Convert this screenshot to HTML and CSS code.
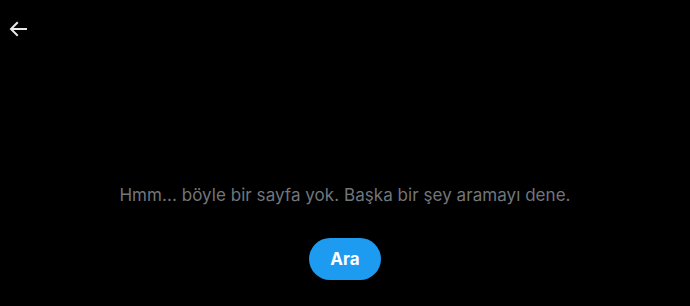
FILE: index.html
```html
<!DOCTYPE html>
<html lang="tr">

<head>
  <meta charset="UTF-8">
  <title>Sayfa bulunamadı</title>
  <meta name="viewport" content="width=device-width, initial-scale=1">
  <link rel="stylesheet" href="styles.css">
</head>

<body>
  <header class="topbar">
    <button class="back-btn" aria-label="Geri">
      <svg viewBox="0 0 24 24" class="back-icon">
        <path d="M7.414 13l5.043 5.04-1.414 1.42L3.586 12l7.457-7.46 1.414 1.42L7.414 11H21v2H7.414z"></path>
      </svg>
    </button>
  </header>
  <main class="empty">
    <p class="empty-text">Hmm... böyle bir sayfa yok. Başka bir şey aramayı dene.</p>
    <button class="search-btn">Ara</button>
  </main>
</body>

</html>
```

FILE: styles.css
```css
body {
  font-family: Inter, "Noto Sans", Arial, sans-serif;
  background: #000;
  color: #e7e9ea;
  margin: 0;
}

.topbar {
  height: 53px;
  display: flex;
  align-items: center;
  padding-left: 2px;
}

.back-btn {
  width: 32px;
  height: 32px;
  padding: 4px;
  border: none;
  background: transparent;
  cursor: pointer;
  margin-top: 4px;
}

.back-icon {
  width: 24px;
  height: 24px;
  fill: #e7e9ea;
  display: block;
}

.empty {
  display: flex;
  flex-direction: column;
  align-items: center;
  padding-top: 130px;
}

.empty-text {
  margin: 0;
  font-size: 17px;
  line-height: 24px;
  letter-spacing: 0.05px;
  color: #71767b;
}

.search-btn {
  margin-top: 31px;
  height: 42px;
  padding: 0 21px;
  border: none;
  border-radius: 21px;
  background: #1d9bf0;
  color: #fff;
  font-family: inherit;
  font-size: 17px;
  font-weight: 700;
  cursor: pointer;
}
```
